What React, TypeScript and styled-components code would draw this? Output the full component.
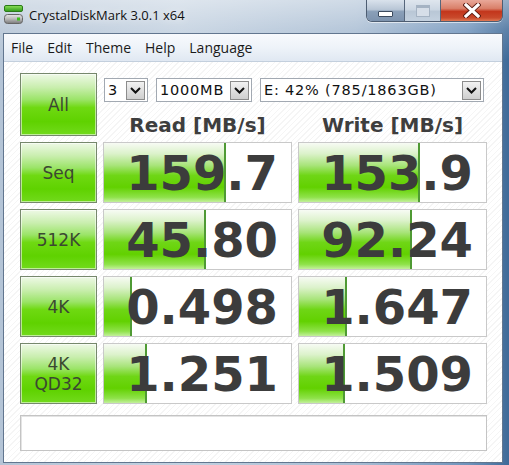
import { Fragment } from "react";
import styled, { createGlobalStyle } from "styled-components";

const GlobalStyle = createGlobalStyle`
  html, body {
    margin: 0;
    padding: 0;
    background: #7f9dbf;
  }
`;

const Frame = styled.div`
  width: 509px;
  height: 465px;
  box-sizing: border-box;
  padding: 0 6px 2px 3px;
  display: flex;
  flex-direction: column;
  background:
    linear-gradient(180deg, rgba(255, 255, 255, 0.45) 0px, rgba(255, 255, 255, 0.15) 30px, rgba(255, 255, 255, 0) 60px),
    linear-gradient(90deg, #b4c4d6 0%, #c3d1e0 35%, #a9bdd3 70%, #6f93bb 92%, #3f6a98 100%);
  font-family: "Open Sans", "Noto Sans", sans-serif;
  overflow: hidden;
`;

const TitleBar = styled.div`
  height: 33px;
  display: flex;
  align-items: flex-start;
  justify-content: space-between;
  flex-shrink: 0;
`;

const TitleLeft = styled.div`
  display: flex;
  align-items: center;
  gap: 6px;
  padding: 4px 0 0 1px;
  height: 22px;
`;

const TitleText = styled.span`
  font-size: 13px;
  color: #111;
  text-shadow: 0 0 8px rgba(255, 255, 255, 0.9);
`;

const WinButtons = styled.div`
  display: flex;
  height: 21px;
  border: 1px solid #4d5d72;
  border-top: none;
  border-radius: 0 0 6px 6px;
  overflow: hidden;
  box-shadow: 0 1px 0 rgba(255, 255, 255, 0.6);
`;

const WinButton = styled.div<{ $kind: "min" | "max" | "close" }>`
  width: ${(p) => (p.$kind === "close" ? "61px" : p.$kind === "max" ? "35px" : "37px")};
  display: flex;
  align-items: center;
  justify-content: center;
  border-left: ${(p) => (p.$kind === "min" ? "none" : "1px solid #56667b")};
  background: ${(p) =>
    p.$kind === "close"
      ? "linear-gradient(180deg, #e9a899 0%, #d9806a 40%, #c3361c 55%, #c94a2c 85%, #e07a55 100%)"
      : p.$kind === "max"
      ? "linear-gradient(180deg, #dfe6ee 0%, #ccd7e3 45%, #b9c7d6 55%, #c4d1df 100%)"
      : "linear-gradient(180deg, #d9e2ec 0%, #b8c6d6 45%, #8a9fb8 55%, #7d93ae 100%)"};
`;

const MinGlyph = styled.div`
  width: 13px;
  height: 4px;
  margin-top: 7px;
  background: #fff;
  border: 1px solid #3b4a5e;
  border-radius: 1px;
`;

const MaxGlyph = styled.div`
  width: 12px;
  height: 8px;
  border: 1px solid #a5b3c3;
  border-top-width: 3px;
  background: #d6dee8;
`;

const Window = styled.div`
  flex: 1;
  display: flex;
  flex-direction: column;
  border: 1px solid #62768f;
  background: #fff;
`;

const MenuBar = styled.div`
  height: 27px;
  display: flex;
  align-items: center;
  gap: 14px;
  padding-left: 7px;
  background: linear-gradient(180deg, #f8fafd 0%, #eef3f9 50%, #e0e8f2 100%);
  border-bottom: 1px solid #c3cfdd;
  flex-shrink: 0;
`;

const MenuItem = styled.span`
  font-size: 14px;
  color: #1a1a1a;
`;

const Client = styled.div`
  flex: 1;
  padding: 11px 0 0 16px;
  background: repeating-linear-gradient(135deg, #ffffff 0px, #ffffff 3px, #f5f5f5 3px, #f5f5f5 4px);
`;

const Grid = styled.div`
  display: grid;
  grid-template-columns: 77px 189px 189px;
  grid-template-rows: 63px repeat(4, 61px);
  column-gap: 6px;
  row-gap: 6px;
`;

const GreenButton = styled.div`
  box-sizing: border-box;
  display: flex;
  flex-direction: column;
  align-items: center;
  justify-content: center;
  border: 1px solid #76886c;
  box-shadow: inset 0 0 0 1px rgba(255, 255, 255, 0.55);
  background: linear-gradient(
    180deg,
    #eef9e6 0%,
    #c9eeae 22%,
    #9be468 42%,
    #6fd912 55%,
    #5fd200 78%,
    #72da1c 100%
  );
  font-family: "DejaVu Sans", "Liberation Sans", sans-serif;
  font-size: 17px;
  line-height: 20px;
  color: #3b4831;
`;

const TopRight = styled.div`
  grid-column: span 2;
  display: flex;
  flex-direction: column;
`;

const SelectRow = styled.div`
  display: flex;
  gap: 8px;
  margin: 5px 0 0 1px;
  height: 24px;
`;

const SelectBox = styled.div<{ $width: number }>`
  box-sizing: border-box;
  width: ${(p) => p.$width}px;
  height: 24px;
  display: flex;
  align-items: center;
  justify-content: space-between;
  padding: 0 2px 0 3px;
  background: #fff;
  border: 1px solid #a2a9b2;
  font-family: "DejaVu Sans", "Liberation Sans", sans-serif;
  font-size: 14.5px;
  letter-spacing: 0.8px;
  color: #111;
`;

const DropButton = styled.div`
  box-sizing: border-box;
  width: 19px;
  height: 19px;
  display: flex;
  align-items: center;
  justify-content: center;
  border: 1px solid #8c8c8c;
  background: linear-gradient(180deg, #f2f2f2 0%, #e0e0e0 50%, #cfcfcf 100%);
`;

const Headers = styled.div`
  display: grid;
  grid-template-columns: 189px 189px;
  column-gap: 6px;
  margin-top: 12px;
`;

const Header = styled.div`
  text-align: center;
  font-family: "DejaVu Sans", "Liberation Sans", sans-serif;
  font-weight: bold;
  font-size: 20px;
  line-height: 22px;
  color: #3e3e3e;
`;

const Cell = styled.div`
  position: relative;
  box-sizing: border-box;
  border: 1px solid #c9c9c9;
  background: #fff;
  overflow: hidden;
`;

const Bar = styled.div`
  position: absolute;
  left: 0;
  top: 0;
  bottom: 0;
  border-right: 2px solid #4f9a34;
  background: linear-gradient(
    180deg,
    #f7fbf4 0%,
    #dcf2cb 18%,
    #a8e47a 38%,
    #6fd616 55%,
    #62d100 75%,
    #8fe24a 92%,
    #c3f09c 100%
  );
`;

const Value = styled.div`
  position: relative;
  height: 100%;
  display: flex;
  align-items: center;
  justify-content: flex-end;
  padding-right: 13px;
  font-family: "DejaVu Sans", "Verdana", sans-serif;
  font-weight: bold;
  font-size: 48px;
  color: #3c3c3c;
`;

const Comment = styled.div`
  box-sizing: border-box;
  width: 467px;
  height: 36px;
  margin-top: 11px;
  border: 1px solid #c4c4c4;
  box-shadow: inset 1px 1px 0 #e4e4e4;
  background: #fff;
`;

const DriveIcon = () => (
  <svg width="19" height="20" viewBox="0 0 19 20">
    <defs>
      <linearGradient id="g1" x1="0" y1="0" x2="0" y2="1">
        <stop offset="0" stopColor="#8de05a" />
        <stop offset="1" stopColor="#2f9a1a" />
      </linearGradient>
      <linearGradient id="g2" x1="0" y1="0" x2="0" y2="1">
        <stop offset="0" stopColor="#e8e8e8" />
        <stop offset="0.5" stopColor="#b8b8b8" />
        <stop offset="1" stopColor="#7a7a7a" />
      </linearGradient>
    </defs>
    <rect x="0.5" y="0.5" width="18" height="6" rx="1.5" fill="url(#g1)" stroke="#2a7a18" />
    <rect x="0.5" y="9.5" width="18" height="9" rx="3" fill="url(#g2)" stroke="#666" />
    <rect x="13" y="12.5" width="3" height="3" fill="#3bc01e" />
  </svg>
);

const Chevron = () => (
  <svg width="11" height="7" viewBox="0 0 11 7">
    <path d="M1 1 L5.5 5.5 L10 1" fill="none" stroke="#111" strokeWidth="2" />
  </svg>
);

const Select = ({ width, text }: { width: number; text: string }) => (
  <SelectBox $width={width}>
    <span>{text}</span>
    <DropButton>
      <Chevron />
    </DropButton>
  </SelectBox>
);

// bar length follows the log scale CrystalDiskMark uses (0.1 .. 10000 MB/s)
const ScoreCell = ({ value }: { value: string }) => {
  const v = parseFloat(value);
  const pct = Math.max(0, Math.min(1, Math.log10(v * 10) / 5));
  return (
    <Cell>
      <Bar style={{ width: `${pct * 187}px` }} />
      <Value>{value}</Value>
    </Cell>
  );
};

const rows = [
  { label: ["Seq"], read: "159.7", write: "153.9" },
  { label: ["512K"], read: "45.80", write: "92.24" },
  { label: ["4K"], read: "0.498", write: "1.647" },
  { label: ["4K", "QD32"], read: "1.251", write: "1.509" },
];

const App = () => {
  return (
    <Frame>
      <GlobalStyle />
      <TitleBar>
        <TitleLeft>
          <DriveIcon />
          <TitleText>CrystalDiskMark 3.0.1 x64</TitleText>
        </TitleLeft>
        <WinButtons>
          <WinButton $kind="min">
            <MinGlyph />
          </WinButton>
          <WinButton $kind="max">
            <MaxGlyph />
          </WinButton>
          <WinButton $kind="close">
            <svg width="18" height="15" viewBox="0 0 18 15">
              <path
                d="M3 2 L15 13 M15 2 L3 13"
                stroke="#5a1a10"
                strokeWidth="5"
                strokeLinecap="square"
              />
              <path
                d="M3 2 L15 13 M15 2 L3 13"
                stroke="#fff"
                strokeWidth="3.2"
                strokeLinecap="square"
              />
            </svg>
          </WinButton>
        </WinButtons>
      </TitleBar>

      <Window>
        <MenuBar>
          <MenuItem>File</MenuItem>
          <MenuItem>Edit</MenuItem>
          <MenuItem>Theme</MenuItem>
          <MenuItem>Help</MenuItem>
          <MenuItem>Language</MenuItem>
        </MenuBar>

        <Client>
          <Grid>
            <GreenButton>All</GreenButton>
            <TopRight>
              <SelectRow>
                <Select width={44} text="3" />
                <Select width={96} text="1000MB" />
                <Select width={224} text="E: 42% (785/1863GB)" />
              </SelectRow>
              <Headers>
                <Header>Read [MB/s]</Header>
                <Header>Write [MB/s]</Header>
              </Headers>
            </TopRight>

            {rows.map((r) => (
              <Fragment key={r.label.join(" ")}>
                <GreenButton>
                  {r.label.map((l) => (
                    <span key={l}>{l}</span>
                  ))}
                </GreenButton>
                <ScoreCell value={r.read} />
                <ScoreCell value={r.write} />
              </Fragment>
            ))}
          </Grid>
          <Comment />
        </Client>
      </Window>
    </Frame>
  );
};

export default App;
